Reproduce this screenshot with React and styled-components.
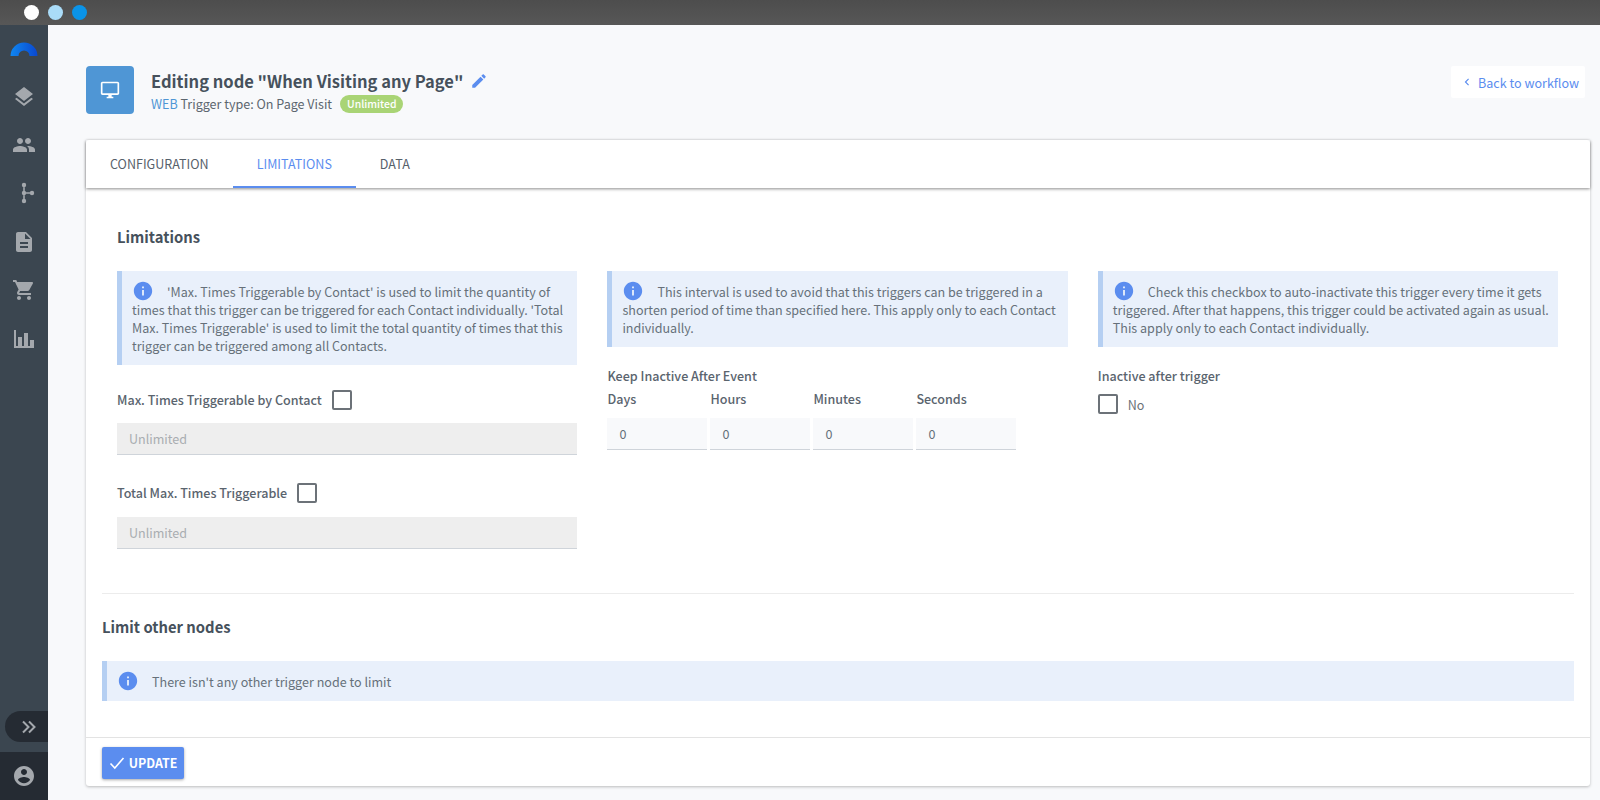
import React from "react";
import styled, { createGlobalStyle } from "styled-components";

const FONT = `"Noto Sans CJK JP", "Noto Sans", sans-serif`;
const TEXT = "12.56px";

const GlobalStyle = createGlobalStyle`
	html, body { margin: 0; padding: 0; height: 100%; }
	body { font-family: ${FONT}; background: #f8f9fb; color: #4a5560; overflow: hidden; }
	* { box-sizing: border-box; }
`;

const Icon = ({ d, size = 24, color = "currentColor", className }) => (
	<svg className={className} width={size} height={size} viewBox="0 0 24 24" fill={color}>
		<path d={d} />
	</svg>
);

const PATHS = {
	layers: "M11.99 18.54l-7.37-5.73L3 14.07l9 7 9-7-1.63-1.27-7.38 5.74zM12 16l7.36-5.73L21 9l-9-7-9 7 1.63 1.27L12 16z",
	people: "M16 11c1.66 0 2.99-1.34 2.99-3S17.66 5 16 5c-1.66 0-3 1.34-3 3s1.34 3 3 3zm-8 0c1.66 0 2.99-1.34 2.99-3S9.66 5 8 5C6.34 5 5 6.34 5 8s1.34 3 3 3zm0 2c-2.33 0-7 1.17-7 3.5V19h14v-2.5c0-2.33-4.67-3.5-7-3.5zm8 0c-.29 0-.62.02-.97.05 1.16.84 1.97 1.97 1.97 3.45V19h6v-2.5c0-2.33-4.67-3.5-7-3.5z",
	doc: "M14 2H6c-1.1 0-1.99.9-1.99 2L4 20c0 1.1.89 2 1.99 2H18c1.1 0 2-.9 2-2V8l-6-6zm2 16H8v-2h8v2zm0-4H8v-2h8v2zm-3-5V3.5L18.5 9H13z",
	cart: "M7 18c-1.1 0-1.99.9-1.99 2S5.9 22 7 22s2-.9 2-2-.9-2-2-2zM1 2v2h2l3.6 7.59-1.35 2.45c-.16.28-.25.61-.25.96 0 1.1.9 2 2 2h12v-2H7.42c-.14 0-.25-.11-.25-.25l.03-.12.9-1.63h7.45c.75 0 1.41-.41 1.75-1.03l3.58-6.49c.08-.14.12-.31.12-.48 0-.55-.45-1-1-1H5.21l-.94-2H1zm16 16c-1.1 0-1.99.9-1.99 2s.89 2 1.99 2 2-.9 2-2-.9-2-2-2z",
	chart: "M2 3h2v16h2v-9h4v9h2V6h4v13h2v-6h4v8H2z",
	flow: "M11.2 4h1.6v16h-1.600zM12 11.200h8v1.600h-8zM12 1.800a2.200 2.200 0 1 1 0 4.400a2.200 2.200 0 1 1 0-4.400zM12 17.800a2.200 2.200 0 1 1 0 4.400a2.200 2.200 0 1 1 0-4.400zM12 9.800a2.200 2.200 0 1 1 0 4.400a2.200 2.200 0 1 1 0-4.400zM20 9.800a2.200 2.200 0 1 1 0 4.400a2.200 2.200 0 1 1 0-4.400z",
	user: "M12 2C6.48 2 2 6.48 2 12s4.48 10 10 10 10-4.48 10-10S17.52 2 12 2zm0 3c1.66 0 3 1.34 3 3s-1.34 3-3 3-3-1.34-3-3 1.34-3 3-3zm0 14.2c-2.5 0-4.71-1.28-6-3.22.03-1.99 4-3.08 6-3.08 1.99 0 5.97 1.09 6 3.08-1.29 1.94-3.5 3.22-6 3.22z",
	edit: "M3 17.25V21h3.75L17.81 9.94l-3.75-3.75L3 17.25zM20.71 7.04c.39-.39.39-1.02 0-1.41l-2.34-2.34c-.39-.39-1.02-.39-1.41 0l-1.83 1.83 3.75 3.75 1.83-1.83z",
	desktop: "M21 2H3c-1.1 0-2 .9-2 2v12c0 1.1.9 2 2 2h7v2H8v2h8v-2h-2v-2h7c1.1 0 2-.9 2-2V4c0-1.1-.9-2-2-2zm0 14H3V4h18v12z",
	info: "M12 2C6.48 2 2 6.48 2 12s4.48 10 10 10 10-4.48 10-10S17.52 2 12 2zm1 15h-2v-6h2v6zm0-8h-2V7h2v2z",
	chevron: "M15.41 7.41L14 6l-6 6 6 6 1.41-1.41L10.83 12z",
};

const NAV = [
	{ name: "layers", nudge: 0 },
	{ name: "people", nudge: 0 },
	{ name: "flow", nudge: 0 },
	{ name: "doc", nudge: 1 },
	{ name: "cart", nudge: 1 },
	{ name: "chart", nudge: 2 },
];

const App = () => {
	return (
		<Page>
			<GlobalStyle />
			<TopBar>
				<Dot color="#ffffff" />
				<Dot color="#aadcf8" />
				<Dot color="#0a93e8" />
			</TopBar>
			<Shell>
				<Sidebar>
					<NavItem>
						<svg width="28" height="14" viewBox="0 0 28 14">
							<defs>
								<linearGradient id="logoArc" x1="0" x2="1" y1="0" y2="0">
									<stop offset="0" stopColor="#0f86f0" />
									<stop offset="1" stopColor="#0a48d0" />
								</linearGradient>
							</defs>
							<path d="M.5 14a13.500 13.500 0 0 1 27 0h-8a5.500 5.500 0 0 0-11 0z" fill="url(#logoArc)" />
						</svg>
					</NavItem>
					{NAV.map(({ name, nudge }) => (
						<NavItem key={name} $nudge={nudge}>
							<Icon d={PATHS[name]} />
						</NavItem>
					))}
					<ExpandPill>
						<svg width="14" height="14" viewBox="0 0 14 14" fill="none" stroke="#a4a8ad" strokeWidth="2">
							<path d="M1 1.500L6.500 7L1 12.500M7 1.500L12.500 7L7 12.500" />
						</svg>
					</ExpandPill>
					<UserBlock>
						<Icon d={PATHS.user} size={24} />
					</UserBlock>
				</Sidebar>
				<Main>
					<Header>
						<NodeIcon>
							<Icon d={PATHS.desktop} size={20} color="#fff" />
						</NodeIcon>
						<HeaderText>
							<Title>
								Editing node "When Visiting any Page"
								<EditIcon d={PATHS.edit} size={18} color="#5b8def" />
							</Title>
							<SubTitle>
								<WebTag>WEB</WebTag> Trigger type: On Page Visit
								<Badge>Unlimited</Badge>
							</SubTitle>
						</HeaderText>
						<BackButton>
							<Icon d={PATHS.chevron} size={14} color="#5b8def" />
							Back to workflow
						</BackButton>
					</Header>
					<Card>
						<Tabs>
							<Tab>CONFIGURATION</Tab>
							<Tab $active>LIMITATIONS</Tab>
							<Tab>DATA</Tab>
						</Tabs>
						<Body>
							<LimitSection>
								<SectionTitle>Limitations</SectionTitle>
								<Columns>
									<div>
										<InfoBox>
											<InfoIcon d={PATHS.info} size={22} color="#5b8def" />
											'Max. Times Triggerable by Contact' is used to limit the quantity of times that this trigger can be triggered for each Contact individually. 'Total Max. Times Triggerable' is used to limit the total quantity of times that this trigger can be triggered among all Contacts.
										</InfoBox>
										<LabelRow>
											<FieldLabel>Max. Times Triggerable by Contact</FieldLabel>
											<CheckBox />
										</LabelRow>
										<LockedInput disabled placeholder="Unlimited" />
										<LabelRow $second>
											<FieldLabel>Total Max. Times Triggerable</FieldLabel>
											<CheckBox />
										</LabelRow>
										<LockedInput disabled placeholder="Unlimited" />
									</div>
									<div>
										<InfoBox>
											<InfoIcon d={PATHS.info} size={22} color="#5b8def" />
											This interval is used to avoid that this triggers can be triggered in a shorten period of time than specified here. This apply only to each Contact individually.
										</InfoBox>
										<GroupLabel>Keep Inactive After Event</GroupLabel>
										<TimeGrid>
											{["Days", "Hours", "Minutes", "Seconds"].map((unit) => (
												<TimeField key={unit}>
													<FieldLabel>{unit}</FieldLabel>
													<TimeInput defaultValue="0" />
												</TimeField>
											))}
										</TimeGrid>
									</div>
									<div>
										<InfoBox>
											<InfoIcon d={PATHS.info} size={22} color="#5b8def" />
											Check this checkbox to auto-inactivate this trigger every time it gets triggered. After that happens, this trigger could be activated again as usual. This apply only to each Contact individually.
										</InfoBox>
										<GroupLabel>Inactive after trigger</GroupLabel>
										<CheckRow>
											<CheckBox />
											<CheckText>No</CheckText>
										</CheckRow>
									</div>
								</Columns>
							</LimitSection>
							<Divider />
							<OtherTitle>Limit other nodes</OtherTitle>
							<InfoBox>
								<InfoIcon d={PATHS.info} size={22} color="#5b8def" />
								There isn't any other trigger node to limit
							</InfoBox>
						</Body>
						<Footer>
							<UpdateButton>
								<svg width="16" height="14" viewBox="0 0 16 14" fill="none" stroke="#fff" strokeWidth="1.6">
									<path d="M1.5 7.5L5.8 12L14.5 2" />
								</svg>
								UPDATE
							</UpdateButton>
						</Footer>
					</Card>
				</Main>
			</Shell>
		</Page>
	);
};

export default App;

const Page = styled.div`
	width: 1600px;
	height: 800px;
	display: flex;
	flex-direction: column;
	overflow: hidden;
`;

const TopBar = styled.div`
	height: 25px;
	flex: none;
	display: flex;
	align-items: center;
	gap: 9px;
	padding: 0 0 0 24px;
	background: linear-gradient(#4d4d4d, #575757);
`;

const Dot = styled.span`
	width: 15px;
	height: 15px;
	border-radius: 50%;
	background: ${(p) => p.color};
`;

const Shell = styled.div`
	flex: 1;
	display: flex;
	min-height: 0;
`;

const Sidebar = styled.nav`
	width: 48px;
	flex: none;
	display: flex;
	flex-direction: column;
	background: #3b4650;
	color: #a4a8ad;
`;

const NavItem = styled.div`
	height: 48px;
	flex: none;
	display: flex;
	align-items: center;
	justify-content: center;
	padding-top: ${(p) => (p.$nudge || 0) * 2}px;
`;

const ExpandPill = styled.div`
	margin: auto 0 10px 5px;
	height: 31px;
	display: flex;
	align-items: center;
	justify-content: center;
	border-radius: 16px 0 0 16px;
	background: #252b33;
	padding-left: 4px;
`;

const UserBlock = styled.div`
	height: 48px;
	flex: none;
	display: flex;
	align-items: center;
	justify-content: center;
	background: #252b33;
`;

const Main = styled.main`
	flex: 1;
	min-width: 0;
	padding: 41px 10px 14px 38px;
	display: flex;
	flex-direction: column;
`;

const Header = styled.header`
	height: 48px;
	display: flex;
	align-items: flex-start;
	margin-bottom: 26px;
`;

const NodeIcon = styled.div`
	width: 48px;
	height: 48px;
	flex: none;
	display: flex;
	align-items: center;
	justify-content: center;
	border-radius: 4px;
	background: #4f96d5;
`;

const HeaderText = styled.div`
	flex: 1;
	margin-left: 17px;
	padding-top: 1px;
`;

const Title = styled.h1`
	margin: 0;
	display: flex;
	align-items: center;
	font-size: 16.5px;
	line-height: 28px;
	font-weight: 700;
	color: #46515c;
`;

const EditIcon = styled(Icon)`
	margin-left: 7px;
`;

const SubTitle = styled.div`
	display: flex;
	align-items: center;
	font-size: ${TEXT};
	line-height: 18px;
	color: #5c666f;
	white-space: pre-wrap;
`;

const WebTag = styled.span`
	color: #4f96d5;
`;

const Badge = styled.span`
	margin-left: 8px;
	padding: 0 7px;
	border-radius: 9px;
	height: 18px;
	line-height: 18px;
	font-size: 10.4px;
	font-weight: 500;
	color: #fff;
	background: #a9d475;
`;

const BackButton = styled.a`
	width: 134px;
	height: 32px;
	margin-right: 5px;
	flex: none;
	display: flex;
	align-items: center;
	gap: 4px;
	padding-left: 9px;
	font-size: ${TEXT};
	white-space: nowrap;
	color: #5b8def;
	background: #fff;
	border-radius: 2px;
`;

const Card = styled.section`
	flex: 1;
	display: flex;
	flex-direction: column;
	border-radius: 3px;
	background: #fff;
	box-shadow: 0 1px 3px rgba(0, 0, 0, 0.25);
`;

const Tabs = styled.div`
	height: 48px;
	flex: none;
	display: flex;
	box-shadow: 0 1px 3px rgba(0, 0, 0, 0.45);
`;

const Tab = styled.div`
	display: flex;
	align-items: center;
	padding: 0 24px;
	font-size: ${TEXT};
	color: ${(p) => (p.$active ? "#5b8def" : "#56606a")};
	border-bottom: 2px solid ${(p) => (p.$active ? "#5b8def" : "transparent")};
`;

const Body = styled.div`
	flex: 1;
	padding: 0 16px;
`;

const LimitSection = styled.div`
	padding: 37px 15px 0;
`;

const SectionTitle = styled.h2`
	margin: 0 0 22px;
	font-size: 14.8px;
	line-height: 24px;
	font-weight: 700;
	color: #46515c;
`;

const Columns = styled.div`
	display: grid;
	grid-template-columns: repeat(3, 460.3px);
	column-gap: 30.1px;
	height: 322px;
`;

const InfoBox = styled.div`
	padding: 12px 5px 10px 10px;
	border-left: 5px solid #b5cff2;
	background: #e9f0fb;
	font-size: ${TEXT};
	line-height: 18px;
	color: #66707a;
`;

const InfoIcon = styled(Icon)`
	margin: -6px 13px -5px 0;
	vertical-align: 0;
`;

const LabelRow = styled.div`
	display: flex;
	align-items: center;
	gap: 10px;
	height: 20px;
	margin: ${(p) => (p.$second ? "28px 0 14px" : "25px 0 13px")};
`;

const FieldLabel = styled.label`
	font-size: ${TEXT};
	line-height: 18px;
	font-weight: 500;
	color: #5a646e;
`;

const CheckBox = styled.span`
	width: 20px;
	height: 20px;
	flex: none;
	border: 2px solid #6c7278;
	border-radius: 2px;
	background: #fff;
`;

const LockedInput = styled.input`
	display: block;
	width: 100%;
	height: 32px;
	padding: 0 12px;
	border: 0;
	border-bottom: 1px solid #cfd4da;
	background: #eeeeee;
	font: ${TEXT} ${FONT};
	outline: none;
	&::placeholder {
		color: #a9adb1;
		opacity: 1;
	}
`;

const GroupLabel = styled.div`
	margin-top: 20px;
	font-size: ${TEXT};
	line-height: 18px;
	font-weight: 500;
	color: #5a646e;
`;

const TimeGrid = styled.div`
	display: flex;
	gap: 3px;
	margin-top: 5px;
`;

const TimeField = styled.div`
	width: 100px;
	display: flex;
	flex-direction: column;
	gap: 10px;
`;

const TimeInput = styled.input`
	width: 100%;
	height: 32px;
	padding: 0 12px;
	border: 0;
	border-bottom: 1px solid #cfd4da;
	background: #f8f9fb;
	font: ${TEXT} ${FONT};
	color: #66707a;
	outline: none;
`;

const CheckRow = styled.div`
	display: flex;
	align-items: center;
	gap: 10px;
	margin-top: 9px;
`;

const CheckText = styled.span`
	font-size: ${TEXT};
	color: #6c7278;
`;

const Divider = styled.hr`
	margin: 0;
	border: 0;
	border-top: 1px solid #ececec;
`;

const OtherTitle = styled.h2`
	margin: 21px 0 22px;
	font-size: 14.8px;
	line-height: 24px;
	font-weight: 700;
	color: #46515c;
`;

const Footer = styled.div`
	height: 49px;
	flex: none;
	padding: 9px 16px 0;
	border-top: 1px solid #e3e3e3;
`;

const UpdateButton = styled.button`
	width: 82px;
	height: 32px;
	display: flex;
	align-items: center;
	justify-content: center;
	gap: 4px;
	padding: 0;
	border: 0;
	border-radius: 2px;
	background: #5b8def;
	box-shadow: 0 1px 3px rgba(0, 0, 0, 0.35);
	font: 700 12.4px ${FONT};
	color: #fff;
`;
